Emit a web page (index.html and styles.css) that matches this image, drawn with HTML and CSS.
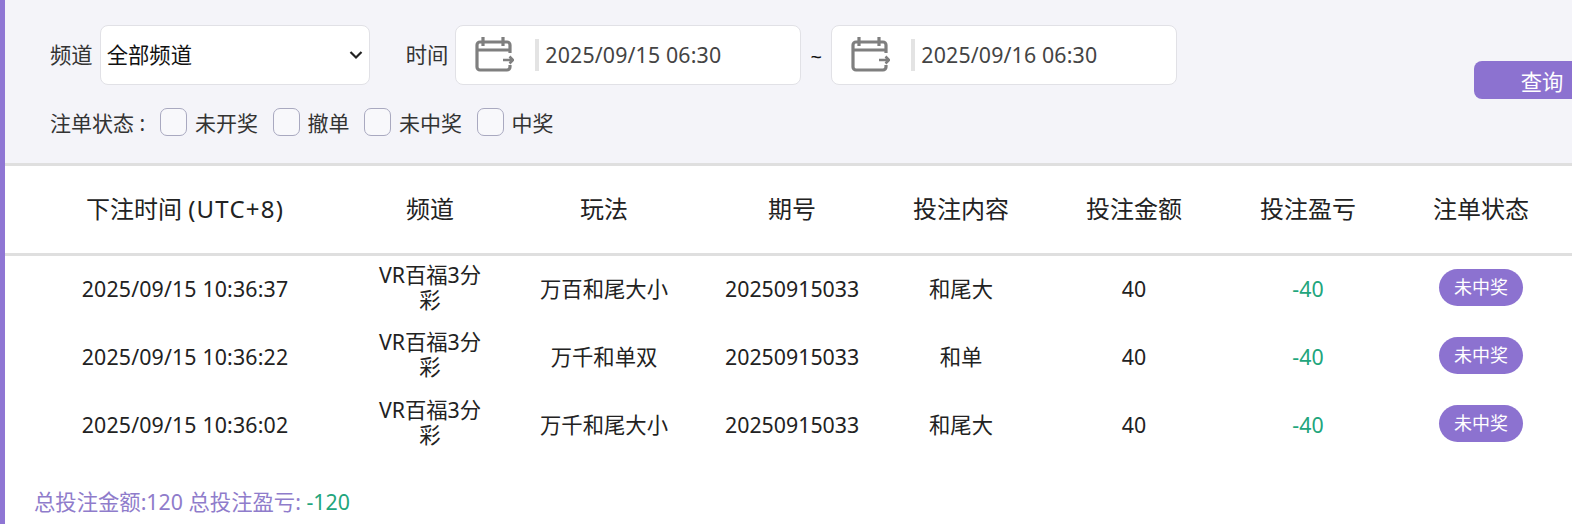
FILE: index.html
```html
<!DOCTYPE html>
<html lang="zh-CN">
<head>
<meta charset="utf-8">
<title>注单</title>
<link rel="stylesheet" href="styles.css">
</head>
<body>
<div class="page">
  <section class="filters">
    <div class="row-main">
      <span class="lbl lbl-channel">频道</span>
      <div class="select"><span class="sel-text">全部频道</span>
        <svg class="chev" viewBox="0 0 14 10" width="14" height="10"><path d="M1.500 2 7 7.500 12.500 2" fill="none" stroke="#222" stroke-width="2.200"/></svg>
      </div>
      <span class="lbl lbl-time">时间</span>
      <div class="date">
        <svg class="cal" viewBox="0 0 40 36" width="40" height="36"><path d="M36 16V8a3 3 0 0 0-3-3H6A3 3 0 0 0 3 8v22a3 3 0 0 0 3 3h27a3 3 0 0 0 3-3v-2M3 13h33M9 0v9M29 0v9" fill="none" stroke="#7f7f7f" stroke-width="3.200"/><path d="M29 23h10m-3.500-3.500 3.500 3.500-3.500 3.500" fill="none" stroke="#7f7f7f" stroke-width="2.500"/></svg>
        <i class="sep"></i><span class="date-text">2025/09/15 06:30</span>
      </div>
      <span class="tilde">~</span>
      <div class="date date-end">
        <svg class="cal" viewBox="0 0 40 36" width="40" height="36"><path d="M36 16V8a3 3 0 0 0-3-3H6A3 3 0 0 0 3 8v22a3 3 0 0 0 3 3h27a3 3 0 0 0 3-3v-2M3 13h33M9 0v9M29 0v9" fill="none" stroke="#7f7f7f" stroke-width="3.200"/><path d="M29 23h10m-3.500-3.500 3.500 3.500-3.500 3.500" fill="none" stroke="#7f7f7f" stroke-width="2.500"/></svg>
        <i class="sep"></i><span class="date-text">2025/09/16 06:30</span>
      </div>
    </div>
    <div class="row-status">
      <span class="status-title">注单状态 :</span>
      <span class="opt"><i class="box"></i>未开奖</span>
      <span class="opt"><i class="box"></i>撤单</span>
      <span class="opt"><i class="box"></i>未中奖</span>
      <span class="opt"><i class="box"></i>中奖</span>
    </div>
    <button class="query">查询</button>
  </section>
  <table class="bets">
    <colgroup>
      <col class="c1"><col class="c2"><col class="c3"><col class="c4"><col class="c5"><col class="c6"><col class="c7"><col class="c8">
    </colgroup>
    <thead>
      <tr><th>下注时间 <span class="utc">(UTC+8)</span></th><th>频道</th><th>玩法</th><th>期号</th><th>投注内容</th><th>投注金额</th><th>投注盈亏</th><th>注单状态</th></tr>
    </thead>
    <tbody>
      <tr><td>2025/09/15 10:36:37</td><td>VR百福3分彩</td><td>万百和尾大小</td><td>20250915033</td><td>和尾大</td><td>40</td><td class="loss">-40</td><td><span class="pill">未中奖</span></td></tr>
      <tr><td>2025/09/15 10:36:22</td><td>VR百福3分彩</td><td>万千和单双</td><td>20250915033</td><td>和单</td><td>40</td><td class="loss">-40</td><td><span class="pill">未中奖</span></td></tr>
      <tr><td>2025/09/15 10:36:02</td><td>VR百福3分彩</td><td>万千和尾大小</td><td>20250915033</td><td>和尾大</td><td>40</td><td class="loss">-40</td><td><span class="pill">未中奖</span></td></tr>
    </tbody>
  </table>
  <p class="total">总投注金额:120 总投注盈亏: <span class="loss">-120</span></p>
</div>
</body>
</html>
```
FILE: styles.css
```css
* { box-sizing: border-box; }
html, body { margin: 0; padding: 0; }
body {
  background: #fff;
  font-family: "Noto Sans", "Noto Sans CJK SC", sans-serif;
  color: #222;
  overflow: hidden;
}
.page {
  width: 1572px;
  height: 524px;
  border-left: 5px solid #8f76d4;
  overflow: hidden;
}
.filters {
  position: relative;
  height: 166px;
  background: #f4f4f9;
  border-bottom: 3px solid #dfdfdf;
  padding: 25px 0 0 45px;
}
.row-main { display: flex; align-items: center; height: 60px; }
.lbl { font-size: 21.33px; color: #333; padding-bottom: 3px; }
.select {
  width: 270px;
  height: 60px;
  margin-left: 7px;
  padding: 0 6px 0 6px;
  background: #fff;
  border: 1px solid #e1e1e6;
  border-radius: 8px;
  display: flex;
  align-items: center;
  justify-content: space-between;
  font-size: 21.33px;
  color: #111;
}
.sel-text { padding-bottom: 3px; }
.lbl-time { margin-left: 36px; }
.date {
  width: 346px;
  height: 60px;
  margin-left: 7px;
  padding-left: 18px;
  background: #fff;
  border: 1px solid #e1e1e6;
  border-radius: 8px;
  display: flex;
  align-items: center;
  font-size: 21.33px;
  letter-spacing: 0.15px;
  color: #444;
}
.date-end { margin-left: 0; }
.date-text { padding-bottom: 1px; }
.cal { flex: none; }
.sep { width: 4px; height: 32px; background: #e3e3e3; margin: 0 6px 0 21px; flex: none; }
.tilde { width: 30px; padding-top: 3px; text-align: center; font-size: 20px; color: #111; }
.row-status { display: flex; align-items: center; height: 30px; margin-top: 22px; font-size: 21px; color: #333; }
.status-title { margin-right: 15px; }
.opt { display: flex; align-items: center; margin-right: 14.500px; }
.box {
  width: 27px;
  height: 28px;
  margin-right: 8px;
  background: #f8f8fb;
  border: 1px solid #a9a9c0;
  border-radius: 7px;
}
.query {
  position: absolute;
  left: 1469px;
  top: 61px;
  width: 120px;
  height: 38px;
  padding: 0 0 0 16px;
  border: 0;
  border-radius: 8px;
  background: #8c72d0;
  color: #fff;
  font: 21.33px "Noto Sans", "Noto Sans CJK SC", sans-serif;
}
.bets { table-layout: fixed; border-collapse: collapse; width: 1567px; }
.c1 { width: 360px; } .c2 { width: 130px; } .c3 { width: 218px; } .c4 { width: 158px; }
.c5 { width: 180px; } .c6 { width: 166px; } .c7 { width: 182px; } .c8 { width: 173px; }
th {
  height: 88px;
  font-size: 24px;
  font-weight: 400;
  color: #222;
  border-bottom: 3px solid #dfdfdf;
  padding: 0 0 3px;
}
th:last-child { padding-right: 9px; }
.utc { letter-spacing: 1.200px; }
td {
  height: 68px;
  padding: 0 12px;
  text-align: center;
  font-size: 21.33px;
  line-height: 25px;
  color: #222;
}
td:first-child { letter-spacing: 0.15px; }
td:nth-child(2) { padding-bottom: 4px; }
td:last-child { padding: 0 9px 0 0; }
.loss { color: #22a57c; }
.pill {
  display: inline-block;
  width: 84px;
  height: 37px;
  margin-bottom: 2px;
  line-height: 37px;
  border-radius: 19px;
  background: #8c72d0;
  color: #fff;
  font-size: 18px;
  vertical-align: middle;
}
.total { margin: 27px 0 0 29px; font-size: 21.33px; color: #8f7ccb; }
```
